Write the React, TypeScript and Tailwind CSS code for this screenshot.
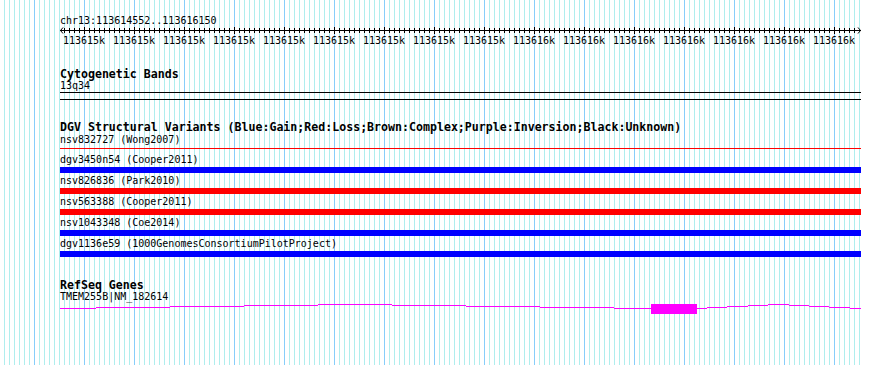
import React from "react";

const GRID_XS: number[] = [];
for (let x = 4; x <= 859; x += 5) GRID_XS.push(x);

function Grid() {
  return (
    <svg className="absolute left-0 top-0" width={890} height={365} shapeRendering="crispEdges">
      {GRID_XS.map((x) => (
        <rect key={x} x={x} y={0} width={1} height={365} fill={(x - 84) % 50 === 0 ? "#87CEFA" : "#AFEEEE"} />
      ))}
    </svg>
  );
}

function Ruler() {
  const ticks: number[] = [];
  for (let x = 64; x <= 854; x += 5) ticks.push(x);
  return (
    <svg width={801} height={10} className="block" shapeRendering="crispEdges">
      <rect x={0} y={4} width={801} height={1} fill="#000" />
      {ticks.map((gx) => {
        const x = gx - 60;
        const major = (gx - 84) % 50 === 0;
        return <rect key={gx} x={x} y={major ? 1 : 2} width={1} height={major ? 7 : 5} fill="#000" />;
      })}
      <polyline points="3,1.5 0.5,4.5 3,7.5" fill="none" stroke="#000" strokeWidth={1} shapeRendering="auto" />
      <polyline points="798,1.5 800.5,4.5 798,7.5" fill="none" stroke="#000" strokeWidth={1} shapeRendering="auto" />
    </svg>
  );
}

const LABELS = [
  ...Array(9).fill("113615k"),
  ...Array(7).fill("113616k"),
];

const ROWS: { label: string; color: string }[] = [
  { label: "dgv3450n54 (Cooper2011)", color: "bg-[#0000ff]" },
  { label: "nsv826836 (Park2010)", color: "bg-[#ff0000]" },
  { label: "nsv563388 (Cooper2011)", color: "bg-[#ff0000]" },
  { label: "nsv1043348 (Coe2014)", color: "bg-[#0000ff]" },
  { label: "dgv1136e59 (1000GenomesConsortiumPilotProject)", color: "bg-[#0000ff]" },
];

const INTRONS: [number, number, number][] = [
  [60, 96, 309], [96, 170, 308], [170, 244, 307], [244, 318, 306], [318, 392, 305],
  [392, 466, 306], [466, 540, 307], [540, 614, 308], [614, 651, 309],
  [697, 707, 309], [707, 727, 308], [727, 748, 307], [748, 768, 306], [768, 789, 305],
  [789, 809, 306], [809, 829, 307], [829, 850, 308], [850, 861, 309],
];

function Gene() {
  return (
    <svg width={801} height={13} className="block" shapeRendering="crispEdges">
      {INTRONS.map(([a, b, y]) => (
        <rect key={a} x={a - 60} y={y - 303} width={b - a} height={1} fill="#ff00ff" />
      ))}
      <rect x={651 - 60} y={2} width={46} height={10} fill="#ff00ff" />
    </svg>
  );
}

function Title({ children, className = "" }: { children: React.ReactNode; className?: string }) {
  return (
    <div className={"h-[12px] leading-[12px] text-[11.6px] font-bold whitespace-pre " + className}>{children}</div>
  );
}

function Label({ children, className = "" }: { children: React.ReactNode; className?: string }) {
  return <div className={"h-[11px] leading-[11px] text-[10px] whitespace-pre " + className}>{children}</div>;
}

export default function App() {
  return (
    <div className="relative w-[890px] h-[365px] bg-white overflow-hidden text-black font-['DejaVu_Sans_Mono',monospace]">
      <Grid />
      <div className="relative ml-[60px] w-[801px] pt-[16px] flex flex-col">
        <div className="h-[10px] leading-[10px] text-[10px] whitespace-pre">chr13:113614552..113616150</div>
        <Ruler />
        <div className="flex h-[10px] leading-[10px] text-[10px] ml-[-1px]">
          {LABELS.map((l, i) => (
            <div key={i} className="w-[50px] shrink-0 flex justify-center whitespace-pre">{l}</div>
          ))}
        </div>

        <Title className="mt-[22px]">Cytogenetic Bands</Title>
        <Label>13q34</Label>
        <div className="mt-[1px] h-[8px] border-y border-black" />

        <Title className="mt-[21px]">DGV Structural Variants (Blue:Gain;Red:Loss;Brown:Complex;Purple:Inversion;Black:Unknown)</Title>
        <Label className="mt-[1px]">nsv832727 (Wong2007)</Label>
        <div className="mt-[3px] h-[1px] bg-[#ff0000]" />
        <div className="mt-[5px] flex flex-col">
          {ROWS.map((r, i) => (
            <div key={i} className={"flex flex-col " + (i > 0 ? "mt-[2px]" : "")}>
              <Label>{r.label}</Label>
              <div className={"mt-[2px] h-[6px] " + r.color} />
            </div>
          ))}
        </div>

        <Title className="mt-[22px]">RefSeq Genes</Title>
        <Label>TMEM255B|NM_182614</Label>
        <Gene />
      </div>
    </div>
  );
}
